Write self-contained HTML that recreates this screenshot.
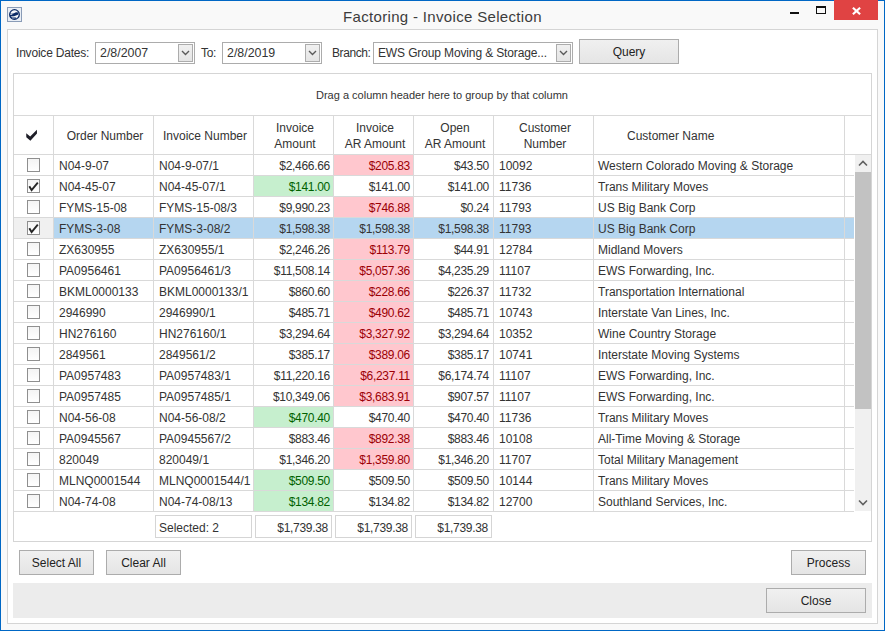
<!DOCTYPE html><html><head><meta charset="utf-8"><style>
*{margin:0;padding:0;box-sizing:border-box}
html,body{width:885px;height:631px;overflow:hidden;background:#f9f9f9;font-family:"Liberation Sans",sans-serif;color:#333}
.abs{position:absolute}
.win{position:absolute;left:0;top:0;width:885px;height:631px;border:1px solid #0067c5;background:#f9f9f9}
.t{position:absolute;white-space:nowrap;line-height:1}
.btn{position:absolute;border:1px solid #acacac;background:linear-gradient(#f0f0f0,#e5e5e5);font-size:12px;color:#222;text-align:center}
.combo{position:absolute;border:1px solid #acacac;background:#fff;height:22px}
.dd{position:absolute;border:1px solid #acacac;background:linear-gradient(#f0f0f0,#e5e5e5)}
.hl{position:absolute;background:#d9d9d9}
.cell{position:absolute;font-size:12px;white-space:nowrap;line-height:1}
.num{letter-spacing:-0.3px}
</style></head><body>
<div class="win"></div>

<svg class="abs" style="left:7px;top:7px" width="15" height="15"><rect x="0.5" y="0.5" width="14" height="14" fill="#e9eef5" stroke="#8a9cb7"/><circle cx="7.5" cy="7.5" r="4.8" fill="#f6f8fb" stroke="#0b2a66" stroke-width="1.3"/><path d="M2.8 6.6L5 6.8L7 6.3L9 5.3L11.3 5.5L11.3 7.5L9 8.5L7 9.3L2.8 9.5Z" fill="#0b2a66"/><path d="M3.2 7.4L5.3 7.4" stroke="#f6f8fb" stroke-width="0.8"/><path d="M3.3 10.1L7.5 10.2L9.4 10.8L8.2 12.3L4.5 12.1Z" fill="#0b2a66"/><path d="M4.8 10.9L7.8 11" stroke="#f6f8fb" stroke-width="0.7"/></svg>
<div class="t" style="left:343px;top:9px;font-size:15px;letter-spacing:0.33px;color:#3c3c3c">Factoring - Invoice Selection</div>
<div class="abs" style="left:790px;top:12px;width:9px;height:2px;background:#111"></div>
<div class="abs" style="left:816px;top:6px;width:10px;height:8px;border:1px solid #111;border-top-width:2px"></div>
<div class="abs" style="left:834px;top:0px;width:44px;height:20px;background:#e04343"></div>
<svg class="abs" style="left:852px;top:7px" width="9" height="8"><path d="M0.9 0.8L8.1 7.2M8.1 0.8L0.9 7.2" stroke="#fff" stroke-width="2.2"/></svg>
<div class="abs" style="left:7px;top:29px;width:871px;height:595px;border:1px solid #d5d5d5;background:#fff"></div>
<div class="t" style="left:16px;top:47px;font-size:12px;letter-spacing:-0.2px">Invoice Dates:</div>
<div class="combo" style="left:95px;top:42px;width:100px"></div>
<div class="t" style="left:100px;top:47px;font-size:12.4px">2/8/2007</div>
<div class="dd" style="left:178px;top:44px;width:15px;height:18px"></div>
<svg class="abs" style="left:181px;top:50px" width="9" height="6"><path d="M1 1L4.5 4.5L8 1" stroke="#5a5a5a" stroke-width="1.35" fill="none"/></svg>
<div class="t" style="left:201px;top:47px;font-size:12px;letter-spacing:-0.3px">To:</div>
<div class="combo" style="left:222px;top:42px;width:100px"></div>
<div class="t" style="left:227px;top:47px;font-size:12.4px">2/8/2019</div>
<div class="dd" style="left:305px;top:44px;width:15px;height:18px"></div>
<svg class="abs" style="left:308px;top:50px" width="9" height="6"><path d="M1 1L4.5 4.5L8 1" stroke="#5a5a5a" stroke-width="1.35" fill="none"/></svg>
<div class="t" style="left:332px;top:47px;font-size:12px;letter-spacing:-0.4px">Branch:</div>
<div class="combo" style="left:373px;top:42px;width:200px"></div>
<div class="t" style="left:378px;top:47px;font-size:12px;letter-spacing:-0.13px">EWS Group Moving &amp; Storage...</div>
<div class="dd" style="left:556px;top:44px;width:15px;height:18px"></div>
<svg class="abs" style="left:559px;top:50px" width="9" height="6"><path d="M1 1L4.5 4.5L8 1" stroke="#5a5a5a" stroke-width="1.35" fill="none"/></svg>
<div class="btn" style="left:579px;top:39px;width:100px;height:25px;line-height:24px">Query</div>
<div class="abs" style="left:13px;top:73px;width:859px;height:469px;border:1px solid #d5d5d5;background:#fff"></div>
<div class="t" style="left:316px;top:90px;font-size:11px;color:#333">Drag a column header here to group by that column</div>
<div class="hl" style="left:14px;top:115px;width:857px;height:1px"></div>
<div class="hl" style="left:14px;top:154px;width:857px;height:1px"></div>
<div class="hl" style="left:53px;top:116px;width:1px;height:38px"></div>
<div class="hl" style="left:153px;top:116px;width:1px;height:38px"></div>
<div class="hl" style="left:253px;top:116px;width:1px;height:38px"></div>
<div class="hl" style="left:333px;top:116px;width:1px;height:38px"></div>
<div class="hl" style="left:413px;top:116px;width:1px;height:38px"></div>
<div class="hl" style="left:493px;top:116px;width:1px;height:38px"></div>
<div class="hl" style="left:593px;top:116px;width:1px;height:38px"></div>
<div class="hl" style="left:844px;top:116px;width:1px;height:38px"></div>
<svg class="abs" style="left:26px;top:129px" width="12" height="13"><path d="M0.2 4.2L4.2 7.6L10.9 0.7L11 4.6L4.4 11.8L0.3 8.3Z" fill="#1e1e28"/></svg>
<div class="t" style="left:54px;width:99px;top:130px;padding-left:3px;text-align:center;font-size:12px;color:#333">Order Number</div>
<div class="t" style="left:154px;width:99px;top:130px;padding-left:3px;text-align:center;font-size:12px;color:#333">Invoice Number</div>
<div class="t" style="left:254px;width:79px;top:120px;padding-left:3px;text-align:center;font-size:12px;color:#333;line-height:16px">Invoice<br>Amount</div>
<div class="t" style="left:334px;width:79px;top:120px;padding-left:3px;text-align:center;font-size:12px;color:#333;line-height:16px">Invoice<br>AR Amount</div>
<div class="t" style="left:414px;width:79px;top:120px;padding-left:3px;text-align:center;font-size:12px;color:#333;line-height:16px">Open<br>AR Amount</div>
<div class="t" style="left:494px;width:99px;top:120px;padding-left:3px;text-align:center;font-size:12px;color:#333;line-height:16px">Customer<br>Number</div>
<div class="t" style="left:627px;top:130px;font-size:12px;color:#333">Customer Name</div>
<div class="abs" style="left:334px;top:155px;width:79px;height:20px;background:#ffc7ce"></div>
<div class="hl" style="left:14px;top:175px;width:840px;height:1px"></div>
<div class="hl" style="left:53px;top:155px;width:1px;height:20px"></div>
<div class="hl" style="left:153px;top:155px;width:1px;height:20px"></div>
<div class="hl" style="left:253px;top:155px;width:1px;height:20px"></div>
<div class="hl" style="left:333px;top:155px;width:1px;height:20px"></div>
<div class="hl" style="left:413px;top:155px;width:1px;height:20px"></div>
<div class="hl" style="left:493px;top:155px;width:1px;height:20px"></div>
<div class="hl" style="left:593px;top:155px;width:1px;height:20px"></div>
<div class="hl" style="left:844px;top:155px;width:1px;height:20px"></div>
<div class="abs" style="left:27px;top:158px;width:13px;height:14px;border:1px solid #8f8f8f;background:linear-gradient(#f4f4f4,#fff)"></div>
<div class="cell" style="left:59px;top:160px">N04-9-07</div>
<div class="cell" style="left:159px;top:160px">N04-9-07/1</div>
<div class="cell num" style="left:254px;width:76px;text-align:right;top:160px;">$2,466.66</div>
<div class="cell num" style="left:334px;width:76px;text-align:right;top:160px;color:#9c0006;">$205.83</div>
<div class="cell num" style="left:414px;width:75px;text-align:right;top:160px">$43.50</div>
<div class="cell" style="left:499px;top:160px">10092</div>
<div class="cell" style="left:598px;top:160px">Western Colorado Moving &amp; Storage</div>
<div class="abs" style="left:254px;top:176px;width:79px;height:20px;background:#c6efce"></div>
<div class="hl" style="left:14px;top:196px;width:840px;height:1px"></div>
<div class="hl" style="left:53px;top:176px;width:1px;height:20px"></div>
<div class="hl" style="left:153px;top:176px;width:1px;height:20px"></div>
<div class="hl" style="left:253px;top:176px;width:1px;height:20px"></div>
<div class="hl" style="left:333px;top:176px;width:1px;height:20px"></div>
<div class="hl" style="left:413px;top:176px;width:1px;height:20px"></div>
<div class="hl" style="left:493px;top:176px;width:1px;height:20px"></div>
<div class="hl" style="left:593px;top:176px;width:1px;height:20px"></div>
<div class="hl" style="left:844px;top:176px;width:1px;height:20px"></div>
<div class="abs" style="left:27px;top:179px;width:13px;height:14px;border:1px solid #8f8f8f;background:linear-gradient(#f4f4f4,#fff)"></div>
<svg class="abs" style="left:27px;top:179px" width="13" height="14"><path d="M2.3 7.2L4.6 11L10.8 3.6" stroke="#262626" stroke-width="1.9" fill="none"/></svg>
<div class="cell" style="left:59px;top:181px">N04-45-07</div>
<div class="cell" style="left:159px;top:181px">N04-45-07/1</div>
<div class="cell num" style="left:254px;width:76px;text-align:right;top:181px;color:#006100;">$141.00</div>
<div class="cell num" style="left:334px;width:76px;text-align:right;top:181px;">$141.00</div>
<div class="cell num" style="left:414px;width:75px;text-align:right;top:181px">$141.00</div>
<div class="cell" style="left:499px;top:181px">11736</div>
<div class="cell" style="left:598px;top:181px">Trans Military Moves</div>
<div class="abs" style="left:334px;top:197px;width:79px;height:20px;background:#ffc7ce"></div>
<div class="hl" style="left:14px;top:217px;width:840px;height:1px"></div>
<div class="hl" style="left:53px;top:197px;width:1px;height:20px"></div>
<div class="hl" style="left:153px;top:197px;width:1px;height:20px"></div>
<div class="hl" style="left:253px;top:197px;width:1px;height:20px"></div>
<div class="hl" style="left:333px;top:197px;width:1px;height:20px"></div>
<div class="hl" style="left:413px;top:197px;width:1px;height:20px"></div>
<div class="hl" style="left:493px;top:197px;width:1px;height:20px"></div>
<div class="hl" style="left:593px;top:197px;width:1px;height:20px"></div>
<div class="hl" style="left:844px;top:197px;width:1px;height:20px"></div>
<div class="abs" style="left:27px;top:200px;width:13px;height:14px;border:1px solid #8f8f8f;background:linear-gradient(#f4f4f4,#fff)"></div>
<div class="cell" style="left:59px;top:202px">FYMS-15-08</div>
<div class="cell" style="left:159px;top:202px">FYMS-15-08/3</div>
<div class="cell num" style="left:254px;width:76px;text-align:right;top:202px;">$9,990.23</div>
<div class="cell num" style="left:334px;width:76px;text-align:right;top:202px;color:#9c0006;">$746.88</div>
<div class="cell num" style="left:414px;width:75px;text-align:right;top:202px">$0.24</div>
<div class="cell" style="left:499px;top:202px">11793</div>
<div class="cell" style="left:598px;top:202px">US Big Bank Corp</div>
<div class="abs" style="left:14px;top:218px;width:39px;height:20px;background:#f0f0f0"></div>
<div class="abs" style="left:54px;top:218px;width:800px;height:20px;background:#b5d6f0"></div>
<div class="hl" style="left:14px;top:238px;width:840px;height:1px"></div>
<div class="hl" style="left:53px;top:218px;width:1px;height:20px"></div>
<div class="hl" style="left:153px;top:218px;width:1px;height:20px"></div>
<div class="hl" style="left:253px;top:218px;width:1px;height:20px"></div>
<div class="hl" style="left:333px;top:218px;width:1px;height:20px"></div>
<div class="hl" style="left:413px;top:218px;width:1px;height:20px"></div>
<div class="hl" style="left:493px;top:218px;width:1px;height:20px"></div>
<div class="hl" style="left:593px;top:218px;width:1px;height:20px"></div>
<div class="hl" style="left:844px;top:218px;width:1px;height:20px"></div>
<div class="abs" style="left:27px;top:221px;width:13px;height:14px;border:1px solid #8f8f8f;background:linear-gradient(#f4f4f4,#fff)"></div>
<svg class="abs" style="left:27px;top:221px" width="13" height="14"><path d="M2.3 7.2L4.6 11L10.8 3.6" stroke="#262626" stroke-width="1.9" fill="none"/></svg>
<div class="cell" style="left:59px;top:223px">FYMS-3-08</div>
<div class="cell" style="left:159px;top:223px">FYMS-3-08/2</div>
<div class="cell num" style="left:254px;width:76px;text-align:right;top:223px;">$1,598.38</div>
<div class="cell num" style="left:334px;width:76px;text-align:right;top:223px;">$1,598.38</div>
<div class="cell num" style="left:414px;width:75px;text-align:right;top:223px">$1,598.38</div>
<div class="cell" style="left:499px;top:223px">11793</div>
<div class="cell" style="left:598px;top:223px">US Big Bank Corp</div>
<div class="abs" style="left:334px;top:239px;width:79px;height:20px;background:#ffc7ce"></div>
<div class="hl" style="left:14px;top:259px;width:840px;height:1px"></div>
<div class="hl" style="left:53px;top:239px;width:1px;height:20px"></div>
<div class="hl" style="left:153px;top:239px;width:1px;height:20px"></div>
<div class="hl" style="left:253px;top:239px;width:1px;height:20px"></div>
<div class="hl" style="left:333px;top:239px;width:1px;height:20px"></div>
<div class="hl" style="left:413px;top:239px;width:1px;height:20px"></div>
<div class="hl" style="left:493px;top:239px;width:1px;height:20px"></div>
<div class="hl" style="left:593px;top:239px;width:1px;height:20px"></div>
<div class="hl" style="left:844px;top:239px;width:1px;height:20px"></div>
<div class="abs" style="left:27px;top:242px;width:13px;height:14px;border:1px solid #8f8f8f;background:linear-gradient(#f4f4f4,#fff)"></div>
<div class="cell" style="left:59px;top:244px">ZX630955</div>
<div class="cell" style="left:159px;top:244px">ZX630955/1</div>
<div class="cell num" style="left:254px;width:76px;text-align:right;top:244px;">$2,246.26</div>
<div class="cell num" style="left:334px;width:76px;text-align:right;top:244px;color:#9c0006;">$113.79</div>
<div class="cell num" style="left:414px;width:75px;text-align:right;top:244px">$44.91</div>
<div class="cell" style="left:499px;top:244px">12784</div>
<div class="cell" style="left:598px;top:244px">Midland Movers</div>
<div class="abs" style="left:334px;top:260px;width:79px;height:20px;background:#ffc7ce"></div>
<div class="hl" style="left:14px;top:280px;width:840px;height:1px"></div>
<div class="hl" style="left:53px;top:260px;width:1px;height:20px"></div>
<div class="hl" style="left:153px;top:260px;width:1px;height:20px"></div>
<div class="hl" style="left:253px;top:260px;width:1px;height:20px"></div>
<div class="hl" style="left:333px;top:260px;width:1px;height:20px"></div>
<div class="hl" style="left:413px;top:260px;width:1px;height:20px"></div>
<div class="hl" style="left:493px;top:260px;width:1px;height:20px"></div>
<div class="hl" style="left:593px;top:260px;width:1px;height:20px"></div>
<div class="hl" style="left:844px;top:260px;width:1px;height:20px"></div>
<div class="abs" style="left:27px;top:263px;width:13px;height:14px;border:1px solid #8f8f8f;background:linear-gradient(#f4f4f4,#fff)"></div>
<div class="cell" style="left:59px;top:265px">PA0956461</div>
<div class="cell" style="left:159px;top:265px">PA0956461/3</div>
<div class="cell num" style="left:254px;width:76px;text-align:right;top:265px;">$11,508.14</div>
<div class="cell num" style="left:334px;width:76px;text-align:right;top:265px;color:#9c0006;">$5,057.36</div>
<div class="cell num" style="left:414px;width:75px;text-align:right;top:265px">$4,235.29</div>
<div class="cell" style="left:499px;top:265px">11107</div>
<div class="cell" style="left:598px;top:265px">EWS Forwarding, Inc.</div>
<div class="abs" style="left:334px;top:281px;width:79px;height:20px;background:#ffc7ce"></div>
<div class="hl" style="left:14px;top:301px;width:840px;height:1px"></div>
<div class="hl" style="left:53px;top:281px;width:1px;height:20px"></div>
<div class="hl" style="left:153px;top:281px;width:1px;height:20px"></div>
<div class="hl" style="left:253px;top:281px;width:1px;height:20px"></div>
<div class="hl" style="left:333px;top:281px;width:1px;height:20px"></div>
<div class="hl" style="left:413px;top:281px;width:1px;height:20px"></div>
<div class="hl" style="left:493px;top:281px;width:1px;height:20px"></div>
<div class="hl" style="left:593px;top:281px;width:1px;height:20px"></div>
<div class="hl" style="left:844px;top:281px;width:1px;height:20px"></div>
<div class="abs" style="left:27px;top:284px;width:13px;height:14px;border:1px solid #8f8f8f;background:linear-gradient(#f4f4f4,#fff)"></div>
<div class="cell" style="left:59px;top:286px">BKML0000133</div>
<div class="cell" style="left:159px;top:286px">BKML0000133/1</div>
<div class="cell num" style="left:254px;width:76px;text-align:right;top:286px;">$860.60</div>
<div class="cell num" style="left:334px;width:76px;text-align:right;top:286px;color:#9c0006;">$228.66</div>
<div class="cell num" style="left:414px;width:75px;text-align:right;top:286px">$226.37</div>
<div class="cell" style="left:499px;top:286px">11732</div>
<div class="cell" style="left:598px;top:286px">Transportation International</div>
<div class="abs" style="left:334px;top:302px;width:79px;height:20px;background:#ffc7ce"></div>
<div class="hl" style="left:14px;top:322px;width:840px;height:1px"></div>
<div class="hl" style="left:53px;top:302px;width:1px;height:20px"></div>
<div class="hl" style="left:153px;top:302px;width:1px;height:20px"></div>
<div class="hl" style="left:253px;top:302px;width:1px;height:20px"></div>
<div class="hl" style="left:333px;top:302px;width:1px;height:20px"></div>
<div class="hl" style="left:413px;top:302px;width:1px;height:20px"></div>
<div class="hl" style="left:493px;top:302px;width:1px;height:20px"></div>
<div class="hl" style="left:593px;top:302px;width:1px;height:20px"></div>
<div class="hl" style="left:844px;top:302px;width:1px;height:20px"></div>
<div class="abs" style="left:27px;top:305px;width:13px;height:14px;border:1px solid #8f8f8f;background:linear-gradient(#f4f4f4,#fff)"></div>
<div class="cell" style="left:59px;top:307px">2946990</div>
<div class="cell" style="left:159px;top:307px">2946990/1</div>
<div class="cell num" style="left:254px;width:76px;text-align:right;top:307px;">$485.71</div>
<div class="cell num" style="left:334px;width:76px;text-align:right;top:307px;color:#9c0006;">$490.62</div>
<div class="cell num" style="left:414px;width:75px;text-align:right;top:307px">$485.71</div>
<div class="cell" style="left:499px;top:307px">10743</div>
<div class="cell" style="left:598px;top:307px">Interstate Van Lines, Inc.</div>
<div class="abs" style="left:334px;top:323px;width:79px;height:20px;background:#ffc7ce"></div>
<div class="hl" style="left:14px;top:343px;width:840px;height:1px"></div>
<div class="hl" style="left:53px;top:323px;width:1px;height:20px"></div>
<div class="hl" style="left:153px;top:323px;width:1px;height:20px"></div>
<div class="hl" style="left:253px;top:323px;width:1px;height:20px"></div>
<div class="hl" style="left:333px;top:323px;width:1px;height:20px"></div>
<div class="hl" style="left:413px;top:323px;width:1px;height:20px"></div>
<div class="hl" style="left:493px;top:323px;width:1px;height:20px"></div>
<div class="hl" style="left:593px;top:323px;width:1px;height:20px"></div>
<div class="hl" style="left:844px;top:323px;width:1px;height:20px"></div>
<div class="abs" style="left:27px;top:326px;width:13px;height:14px;border:1px solid #8f8f8f;background:linear-gradient(#f4f4f4,#fff)"></div>
<div class="cell" style="left:59px;top:328px">HN276160</div>
<div class="cell" style="left:159px;top:328px">HN276160/1</div>
<div class="cell num" style="left:254px;width:76px;text-align:right;top:328px;">$3,294.64</div>
<div class="cell num" style="left:334px;width:76px;text-align:right;top:328px;color:#9c0006;">$3,327.92</div>
<div class="cell num" style="left:414px;width:75px;text-align:right;top:328px">$3,294.64</div>
<div class="cell" style="left:499px;top:328px">10352</div>
<div class="cell" style="left:598px;top:328px">Wine Country Storage</div>
<div class="abs" style="left:334px;top:344px;width:79px;height:20px;background:#ffc7ce"></div>
<div class="hl" style="left:14px;top:364px;width:840px;height:1px"></div>
<div class="hl" style="left:53px;top:344px;width:1px;height:20px"></div>
<div class="hl" style="left:153px;top:344px;width:1px;height:20px"></div>
<div class="hl" style="left:253px;top:344px;width:1px;height:20px"></div>
<div class="hl" style="left:333px;top:344px;width:1px;height:20px"></div>
<div class="hl" style="left:413px;top:344px;width:1px;height:20px"></div>
<div class="hl" style="left:493px;top:344px;width:1px;height:20px"></div>
<div class="hl" style="left:593px;top:344px;width:1px;height:20px"></div>
<div class="hl" style="left:844px;top:344px;width:1px;height:20px"></div>
<div class="abs" style="left:27px;top:347px;width:13px;height:14px;border:1px solid #8f8f8f;background:linear-gradient(#f4f4f4,#fff)"></div>
<div class="cell" style="left:59px;top:349px">2849561</div>
<div class="cell" style="left:159px;top:349px">2849561/2</div>
<div class="cell num" style="left:254px;width:76px;text-align:right;top:349px;">$385.17</div>
<div class="cell num" style="left:334px;width:76px;text-align:right;top:349px;color:#9c0006;">$389.06</div>
<div class="cell num" style="left:414px;width:75px;text-align:right;top:349px">$385.17</div>
<div class="cell" style="left:499px;top:349px">10741</div>
<div class="cell" style="left:598px;top:349px">Interstate Moving Systems</div>
<div class="abs" style="left:334px;top:365px;width:79px;height:20px;background:#ffc7ce"></div>
<div class="hl" style="left:14px;top:385px;width:840px;height:1px"></div>
<div class="hl" style="left:53px;top:365px;width:1px;height:20px"></div>
<div class="hl" style="left:153px;top:365px;width:1px;height:20px"></div>
<div class="hl" style="left:253px;top:365px;width:1px;height:20px"></div>
<div class="hl" style="left:333px;top:365px;width:1px;height:20px"></div>
<div class="hl" style="left:413px;top:365px;width:1px;height:20px"></div>
<div class="hl" style="left:493px;top:365px;width:1px;height:20px"></div>
<div class="hl" style="left:593px;top:365px;width:1px;height:20px"></div>
<div class="hl" style="left:844px;top:365px;width:1px;height:20px"></div>
<div class="abs" style="left:27px;top:368px;width:13px;height:14px;border:1px solid #8f8f8f;background:linear-gradient(#f4f4f4,#fff)"></div>
<div class="cell" style="left:59px;top:370px">PA0957483</div>
<div class="cell" style="left:159px;top:370px">PA0957483/1</div>
<div class="cell num" style="left:254px;width:76px;text-align:right;top:370px;">$11,220.16</div>
<div class="cell num" style="left:334px;width:76px;text-align:right;top:370px;color:#9c0006;">$6,237.11</div>
<div class="cell num" style="left:414px;width:75px;text-align:right;top:370px">$6,174.74</div>
<div class="cell" style="left:499px;top:370px">11107</div>
<div class="cell" style="left:598px;top:370px">EWS Forwarding, Inc.</div>
<div class="abs" style="left:334px;top:386px;width:79px;height:20px;background:#ffc7ce"></div>
<div class="hl" style="left:14px;top:406px;width:840px;height:1px"></div>
<div class="hl" style="left:53px;top:386px;width:1px;height:20px"></div>
<div class="hl" style="left:153px;top:386px;width:1px;height:20px"></div>
<div class="hl" style="left:253px;top:386px;width:1px;height:20px"></div>
<div class="hl" style="left:333px;top:386px;width:1px;height:20px"></div>
<div class="hl" style="left:413px;top:386px;width:1px;height:20px"></div>
<div class="hl" style="left:493px;top:386px;width:1px;height:20px"></div>
<div class="hl" style="left:593px;top:386px;width:1px;height:20px"></div>
<div class="hl" style="left:844px;top:386px;width:1px;height:20px"></div>
<div class="abs" style="left:27px;top:389px;width:13px;height:14px;border:1px solid #8f8f8f;background:linear-gradient(#f4f4f4,#fff)"></div>
<div class="cell" style="left:59px;top:391px">PA0957485</div>
<div class="cell" style="left:159px;top:391px">PA0957485/1</div>
<div class="cell num" style="left:254px;width:76px;text-align:right;top:391px;">$10,349.06</div>
<div class="cell num" style="left:334px;width:76px;text-align:right;top:391px;color:#9c0006;">$3,683.91</div>
<div class="cell num" style="left:414px;width:75px;text-align:right;top:391px">$907.57</div>
<div class="cell" style="left:499px;top:391px">11107</div>
<div class="cell" style="left:598px;top:391px">EWS Forwarding, Inc.</div>
<div class="abs" style="left:254px;top:407px;width:79px;height:20px;background:#c6efce"></div>
<div class="hl" style="left:14px;top:427px;width:840px;height:1px"></div>
<div class="hl" style="left:53px;top:407px;width:1px;height:20px"></div>
<div class="hl" style="left:153px;top:407px;width:1px;height:20px"></div>
<div class="hl" style="left:253px;top:407px;width:1px;height:20px"></div>
<div class="hl" style="left:333px;top:407px;width:1px;height:20px"></div>
<div class="hl" style="left:413px;top:407px;width:1px;height:20px"></div>
<div class="hl" style="left:493px;top:407px;width:1px;height:20px"></div>
<div class="hl" style="left:593px;top:407px;width:1px;height:20px"></div>
<div class="hl" style="left:844px;top:407px;width:1px;height:20px"></div>
<div class="abs" style="left:27px;top:410px;width:13px;height:14px;border:1px solid #8f8f8f;background:linear-gradient(#f4f4f4,#fff)"></div>
<div class="cell" style="left:59px;top:412px">N04-56-08</div>
<div class="cell" style="left:159px;top:412px">N04-56-08/2</div>
<div class="cell num" style="left:254px;width:76px;text-align:right;top:412px;color:#006100;">$470.40</div>
<div class="cell num" style="left:334px;width:76px;text-align:right;top:412px;">$470.40</div>
<div class="cell num" style="left:414px;width:75px;text-align:right;top:412px">$470.40</div>
<div class="cell" style="left:499px;top:412px">11736</div>
<div class="cell" style="left:598px;top:412px">Trans Military Moves</div>
<div class="abs" style="left:334px;top:428px;width:79px;height:20px;background:#ffc7ce"></div>
<div class="hl" style="left:14px;top:448px;width:840px;height:1px"></div>
<div class="hl" style="left:53px;top:428px;width:1px;height:20px"></div>
<div class="hl" style="left:153px;top:428px;width:1px;height:20px"></div>
<div class="hl" style="left:253px;top:428px;width:1px;height:20px"></div>
<div class="hl" style="left:333px;top:428px;width:1px;height:20px"></div>
<div class="hl" style="left:413px;top:428px;width:1px;height:20px"></div>
<div class="hl" style="left:493px;top:428px;width:1px;height:20px"></div>
<div class="hl" style="left:593px;top:428px;width:1px;height:20px"></div>
<div class="hl" style="left:844px;top:428px;width:1px;height:20px"></div>
<div class="abs" style="left:27px;top:431px;width:13px;height:14px;border:1px solid #8f8f8f;background:linear-gradient(#f4f4f4,#fff)"></div>
<div class="cell" style="left:59px;top:433px">PA0945567</div>
<div class="cell" style="left:159px;top:433px">PA0945567/2</div>
<div class="cell num" style="left:254px;width:76px;text-align:right;top:433px;">$883.46</div>
<div class="cell num" style="left:334px;width:76px;text-align:right;top:433px;color:#9c0006;">$892.38</div>
<div class="cell num" style="left:414px;width:75px;text-align:right;top:433px">$883.46</div>
<div class="cell" style="left:499px;top:433px">10108</div>
<div class="cell" style="left:598px;top:433px">All-Time Moving &amp; Storage</div>
<div class="abs" style="left:334px;top:449px;width:79px;height:20px;background:#ffc7ce"></div>
<div class="hl" style="left:14px;top:469px;width:840px;height:1px"></div>
<div class="hl" style="left:53px;top:449px;width:1px;height:20px"></div>
<div class="hl" style="left:153px;top:449px;width:1px;height:20px"></div>
<div class="hl" style="left:253px;top:449px;width:1px;height:20px"></div>
<div class="hl" style="left:333px;top:449px;width:1px;height:20px"></div>
<div class="hl" style="left:413px;top:449px;width:1px;height:20px"></div>
<div class="hl" style="left:493px;top:449px;width:1px;height:20px"></div>
<div class="hl" style="left:593px;top:449px;width:1px;height:20px"></div>
<div class="hl" style="left:844px;top:449px;width:1px;height:20px"></div>
<div class="abs" style="left:27px;top:452px;width:13px;height:14px;border:1px solid #8f8f8f;background:linear-gradient(#f4f4f4,#fff)"></div>
<div class="cell" style="left:59px;top:454px">820049</div>
<div class="cell" style="left:159px;top:454px">820049/1</div>
<div class="cell num" style="left:254px;width:76px;text-align:right;top:454px;">$1,346.20</div>
<div class="cell num" style="left:334px;width:76px;text-align:right;top:454px;color:#9c0006;">$1,359.80</div>
<div class="cell num" style="left:414px;width:75px;text-align:right;top:454px">$1,346.20</div>
<div class="cell" style="left:499px;top:454px">11707</div>
<div class="cell" style="left:598px;top:454px">Total Military Management</div>
<div class="abs" style="left:254px;top:470px;width:79px;height:20px;background:#c6efce"></div>
<div class="hl" style="left:14px;top:490px;width:840px;height:1px"></div>
<div class="hl" style="left:53px;top:470px;width:1px;height:20px"></div>
<div class="hl" style="left:153px;top:470px;width:1px;height:20px"></div>
<div class="hl" style="left:253px;top:470px;width:1px;height:20px"></div>
<div class="hl" style="left:333px;top:470px;width:1px;height:20px"></div>
<div class="hl" style="left:413px;top:470px;width:1px;height:20px"></div>
<div class="hl" style="left:493px;top:470px;width:1px;height:20px"></div>
<div class="hl" style="left:593px;top:470px;width:1px;height:20px"></div>
<div class="hl" style="left:844px;top:470px;width:1px;height:20px"></div>
<div class="abs" style="left:27px;top:473px;width:13px;height:14px;border:1px solid #8f8f8f;background:linear-gradient(#f4f4f4,#fff)"></div>
<div class="cell" style="left:59px;top:475px">MLNQ0001544</div>
<div class="cell" style="left:159px;top:475px">MLNQ0001544/1</div>
<div class="cell num" style="left:254px;width:76px;text-align:right;top:475px;color:#006100;">$509.50</div>
<div class="cell num" style="left:334px;width:76px;text-align:right;top:475px;">$509.50</div>
<div class="cell num" style="left:414px;width:75px;text-align:right;top:475px">$509.50</div>
<div class="cell" style="left:499px;top:475px">10144</div>
<div class="cell" style="left:598px;top:475px">Trans Military Moves</div>
<div class="abs" style="left:254px;top:491px;width:79px;height:20px;background:#c6efce"></div>
<div class="hl" style="left:14px;top:511px;width:840px;height:1px"></div>
<div class="hl" style="left:53px;top:491px;width:1px;height:20px"></div>
<div class="hl" style="left:153px;top:491px;width:1px;height:20px"></div>
<div class="hl" style="left:253px;top:491px;width:1px;height:20px"></div>
<div class="hl" style="left:333px;top:491px;width:1px;height:20px"></div>
<div class="hl" style="left:413px;top:491px;width:1px;height:20px"></div>
<div class="hl" style="left:493px;top:491px;width:1px;height:20px"></div>
<div class="hl" style="left:593px;top:491px;width:1px;height:20px"></div>
<div class="hl" style="left:844px;top:491px;width:1px;height:20px"></div>
<div class="abs" style="left:27px;top:494px;width:13px;height:14px;border:1px solid #8f8f8f;background:linear-gradient(#f4f4f4,#fff)"></div>
<div class="cell" style="left:59px;top:496px">N04-74-08</div>
<div class="cell" style="left:159px;top:496px">N04-74-08/13</div>
<div class="cell num" style="left:254px;width:76px;text-align:right;top:496px;color:#006100;">$134.82</div>
<div class="cell num" style="left:334px;width:76px;text-align:right;top:496px;">$134.82</div>
<div class="cell num" style="left:414px;width:75px;text-align:right;top:496px">$134.82</div>
<div class="cell" style="left:499px;top:496px">12700</div>
<div class="cell" style="left:598px;top:496px">Southland Services, Inc.</div>
<div class="abs" style="left:855px;top:155px;width:16px;height:356px;background:#f0f0f0"></div>
<div class="abs" style="left:855px;top:172px;width:16px;height:237px;background:#c2c2c2"></div>
<svg class="abs" style="left:858px;top:160px" width="10" height="7"><path d="M1 5.5L5 1.5L9 5.5" stroke="#606060" stroke-width="1.6" fill="none"/></svg>
<svg class="abs" style="left:858px;top:499px" width="10" height="7"><path d="M1 1.5L5 5.5L9 1.5" stroke="#606060" stroke-width="1.6" fill="none"/></svg>
<div class="abs" style="left:155px;top:515px;width:97px;height:23px;border:1px solid #d5d5d5;background:#fff"></div>
<div class="cell" style="left:159px;top:522px">Selected: 2</div>
<div class="abs" style="left:255px;top:515px;width:77px;height:23px;border:1px solid #d5d5d5;background:#fff"></div>
<div class="cell num" style="left:255px;width:73px;text-align:right;top:522px">$1,739.38</div>
<div class="abs" style="left:335px;top:515px;width:77px;height:23px;border:1px solid #d5d5d5;background:#fff"></div>
<div class="cell num" style="left:335px;width:73px;text-align:right;top:522px">$1,739.38</div>
<div class="abs" style="left:415px;top:515px;width:77px;height:23px;border:1px solid #d5d5d5;background:#fff"></div>
<div class="cell num" style="left:415px;width:73px;text-align:right;top:522px">$1,739.38</div>
<div class="btn" style="left:19px;top:550px;width:75px;height:25px;line-height:24px">Select All</div>
<div class="btn" style="left:106px;top:550px;width:75px;height:25px;line-height:24px">Clear All</div>
<div class="btn" style="left:791px;top:550px;width:75px;height:25px;line-height:24px">Process</div>
<div class="abs" style="left:13px;top:583px;width:859px;height:35px;background:#ececec"></div>
<div class="btn" style="left:766px;top:588px;width:100px;height:25px;line-height:24px">Close</div>
</body></html>
